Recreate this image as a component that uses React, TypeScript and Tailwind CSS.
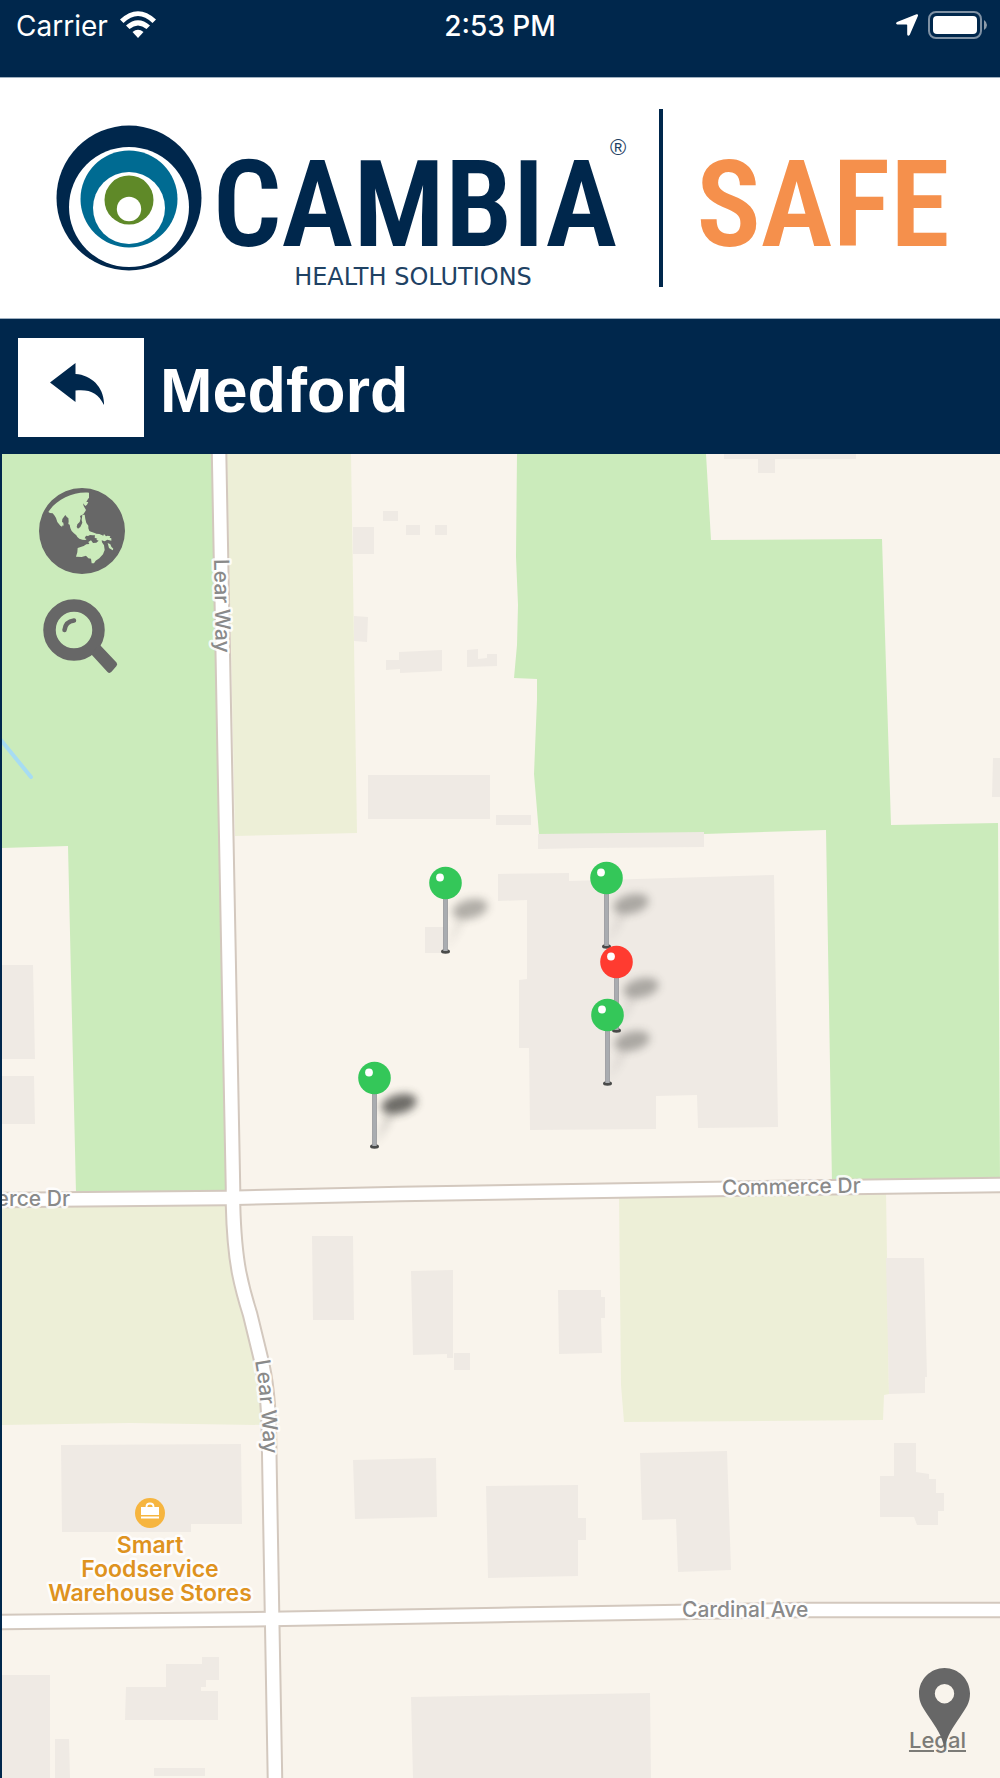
import React from 'react';

const BUILDINGS = [
  '383,511 398,511 398,521 383,521',
  '406,525 420,525 420,535 406,535',
  '435,525 447,525 447,535 435,535',
  '353,527 374,527 374,554 353,554',
  '354,616 368,617 367,642 354,641',
  '386,660 399,660 399,652 442,650 442,671 400,673 400,669 386,670',
  '467,650 478,649 478,659 487,658 487,654 497,654 497,666 467,667',
  '724,454 856,454 856,459 775,459 775,473 758,473 758,459 724,459',
  '993,758 1000,758 1000,797 992,797',
  '496,815 531,815 531,825 496,825',
  '538,834 704,832 704,847 588,848 538,849',
  '368,775 490,775 490,819 368,819',
  '425,927 446,927 446,953 425,953',
  '2,965 33,965 35,1059 2,1059',
  '2,1076 34,1076 35,1124 2,1124',
  '498,874 569,873 569,881 774,875 778,1127 698,1128 697,1095 656,1096 656,1129 530,1130 529,1048 519,1048 519,980 527,979 527,900 498,901',
  '312,1236 353,1236 354,1320 313,1320',
  '411,1271 453,1270 453,1358 447,1358 447,1354 413,1355',
  '454,1353 470,1353 470,1370 454,1370',
  '61,1445 241,1444 242,1524 191,1524 191,1532 62,1532',
  '353,1460 436,1458 437,1517 355,1519',
  '486,1486 578,1485 578,1518 586,1518 586,1540 578,1540 578,1576 488,1578',
  '166,1664 202,1664 202,1657 219,1657 219,1680 206,1680 206,1687 201,1687 201,1691 218,1691 218,1720 125,1720 126,1687 166,1687',
  '2,1675 50,1675 50,1778 2,1778',
  '55,1739 69,1739 70,1778 55,1778',
  '154,1768 205,1768 205,1776 154,1776',
  '411,1697 650,1693 651,1778 413,1778',
  '558,1290 601,1290 601,1297 605,1297 605,1318 601,1318 602,1353 559,1354',
  '886,1258 924,1258 927,1377 925,1377 925,1393 889,1394',
  '640,1453 727,1451 731,1570 678,1572 676,1519 642,1520',
  '894,1443 916,1443 916,1472 929,1474 929,1479 936,1479 936,1493 944,1493 944,1511 938,1511 938,1525 917,1525 914,1517 880,1517 880,1476 894,1476',
];

const ROADS = [
  'M2 1200 L226 1198 L400 1194 L850 1187 L1001 1185',
  'M2 1622 L270 1619 L500 1615 L680 1612 L800 1610 L1001 1610',
  'M219 450 L224 720 L233 1188 L233 1204 Q234 1245 239 1272 Q243 1292 250 1314 L260 1355 Q269 1390 269 1440 L272 1612 L275 1780',
];

const PINS = [
  { x: 445, y: 883, color: '#34c759', shade: 0.36 },
  { x: 606, y: 878, color: '#34c759', shade: 0.36 },
  { x: 616, y: 962, color: '#ff3b30', shade: 0.36 },
  { x: 607, y: 1015, color: '#34c759', shade: 0.36 },
  { x: 374, y: 1078, color: '#34c759', shade: 0.7 },
];

function Pin({ x, y, color, shade }: { x: number; y: number; color: string; shade: number }) {
  return (
    <g transform={`translate(${x} ${y})`}>
      <path d="M1 67 L12 38 L20 30 L16 44 Z" fill="#3b3a36" opacity={shade / 3} filter="url(#soft)" />
      <ellipse cx="25" cy="26" rx="18" ry="9.500" transform="rotate(-14 25 26)" fill="#33322e" opacity={shade} filter="url(#soft)" />
      <ellipse cx="0.500" cy="68.500" rx="4.500" ry="2.200" fill="#4a4b4a" />
      <rect x="-1.500" y="14" width="4" height="54" fill="#a9acb0" />
      <path d="M-1.500 14 V68 M2.500 14 V68" stroke="#8f9195" strokeWidth="0.700" />
      <circle cx="0.500" r="16.300" fill={color} />
      <circle cx="-5" cy="-5.500" r="3.900" fill="#fff" />
    </g>
  );
}

function MapCanvas() {
  return (
    <svg viewBox="2 454 998 1324" preserveAspectRatio="xMidYMid slice" className="block size-full bg-[#f9f4ec]" role="img" aria-label="Map of Medford">
      <defs>
        <filter id="soft" x="-50%" y="-80%" width="200%" height="260%">
          <feGaussianBlur stdDeviation="4" />
        </filter>
        <path id="lear-upper" d="M214 559 L216 665" />
        <path id="lear-lower" d="M255 1361 Q262 1400 264 1465" />
      </defs>
      <g fill="#cbebbb">
        <polygon points="2,454 212,454 226,1193 76,1193 68,846 2,848" />
        <polygon points="517,454 706,454 711,540 882,539 891,825 998,823 1000,1183 832,1183 826,830 704,834 539,834 534,774 537,700 537,679 514,678 517,645 518,605 516,557" />
      </g>
      <g fill="#edefd7">
        <polygon points="227,454 351,454 357,833 235,836" />
        <polygon points="2,1204 233,1204 238,1271 262,1372 264,1425 130,1423 2,1425" />
        <polygon points="619,1195 886,1190 889,1394 884,1395 883,1420 624,1422 621,1385" />
      </g>
      <path d="M0 739 L31 777" stroke="#a7dcf2" strokeWidth="4" strokeLinecap="round" />
      <g fill="#efeae4">
        {BUILDINGS.map((points) => (
          <polygon key={points} points={points} />
        ))}
      </g>
      <g fill="none" stroke="#d3c8be" strokeWidth="16.500">
        {ROADS.map((d) => (
          <path key={d} d={d} />
        ))}
      </g>
      <g fill="none" stroke="#fff" strokeWidth="12.500">
        {ROADS.map((d) => (
          <path key={d} d={d} />
        ))}
      </g>
      <g className="font-['Inter',sans-serif] text-[21px] font-medium" fill="#8a8a8a" stroke="#fff" strokeOpacity="0.85" strokeWidth="5" strokeLinejoin="round" paintOrder="stroke">
        <text x="722" y="1195" transform="rotate(-1 722 1195)">Commerce Dr</text>
        <text x="70" y="1206" textAnchor="end">erce Dr</text>
        <text x="682" y="1617">Cardinal Ave</text>
        <text>
          <textPath href="#lear-upper">Lear Way</textPath>
        </text>
        <text>
          <textPath href="#lear-lower">Lear Way</textPath>
        </text>
      </g>
      <circle cx="150" cy="1513" r="15" fill="#f6b53f" />
      <path d="M146.500 1508 V1506.500 Q146.500 1503.500 150 1503.500 Q153.500 1503.500 153.500 1506.500 V1508" fill="none" stroke="#fff" strokeWidth="1.800" />
      <path d="M141 1507 H159 V1515 H141 Z M141 1516.500 H159 V1518.500 H141 Z" fill="#fff" />
      <g className="font-['Inter',sans-serif] text-[23px] font-semibold" fill="#de931f" stroke="#fff" strokeOpacity="0.85" strokeWidth="5" strokeLinejoin="round" paintOrder="stroke" textAnchor="middle">
        <text x="150" y="1553">Smart</text>
        <text x="150" y="1577">Foodservice</text>
        <text x="150" y="1601">Warehouse Stores</text>
      </g>
      {PINS.map((pin) => (
        <Pin key={`${pin.x}-${pin.y}`} {...pin} />
      ))}
    </svg>
  );
}

function GlobeIcon() {
  return (
    <svg viewBox="9 8 258 258" className="size-[86px]" fill="currentColor" fillRule="evenodd" aria-hidden="true">
      <path
        d="M138 8 A129 129 0 1 0 138 266 A129 129 0 1 0 138 8 Z
        M159 22 C112 18 62 41 37 80 L42 83 L50 84 L56 91 L60 98 L64 110 L73 121 L78 124 L80 120 L83 121 L82 112 L78 110 L79 101 L88 89 L93 96 L97 98 L98 108 L97 116 L101 118 L103 128 L107 137 L113 143 L121 150 L124 155 L130 160 L139 163 L148 164 L152 161 L146 159 L150 151 L156 152 L162 149 L170 150 L177 150 L176 157 L184 160 L181 163 L188 166 L181 172 L171 173 L165 165 L157 170 L160 176 L151 177 L143 182 L125 188 L124 201 L120 214 L137 215 L150 211 L157 219 L165 220 L167 234 L174 234 L179 226 L190 219 L201 207 L206 194 L204 180 L198 171 L197 165 L206 168 L214 163 L226 166 L226 159 L221 157 L223 153 L215 151 L210 153 L204 146 L202 151 L190 146 L181 145 L174 142 L165 139 L160 137 L157 129 L157 121 L151 113 L148 101 L146 88 L139 89 L137 104 L139 112 L133 125 L126 130 L122 125 L124 117 L131 110 L134 99 L132 92 L142 87 L147 79 L150 74 L143 62 L141 54 L148 62 L153 58 L157 50 L151 50 L156 41 L159 37 Z
        M215 173 L223 177 L226 184 L232 190 L230 195 L219 188 Z"
      />
      <path d="M157 157 L164 151 L171 155 L168 160 L158 161 Z" />
    </svg>
  );
}

function StatusBar() {
  return (
    <div className="grid h-[77px] grid-cols-3 items-start px-4 pt-1.5 font-['Inter',sans-serif] text-[28px] leading-10 text-white">
      <div className="flex items-center gap-3">
        <span>Carrier</span>
        <svg viewBox="0 0 36 27" className="-mt-1 h-[27px] w-9" fill="#fff" aria-hidden="true">
          <path d="M0 8.500 Q18 -8 36 8.500 L32.500 12 Q18 -2 3.500 12 Z" />
          <path d="M6 14.500 Q18 4 30 14.500 L26.500 18 Q18 11 9.500 18 Z" />
          <path d="M12.500 21 Q18 16.500 23.500 21 L18 27 Z" />
        </svg>
      </div>
      <span className="text-center font-medium">2:53 PM</span>
      <div className="-mr-1 flex h-[37px] items-center justify-end gap-2.5">
        <svg viewBox="0 0 22 22" className="size-[22px]" fill="#fff" aria-hidden="true">
          <path d="M20.500 0.200 Q22.400 -0.200 22 1.800 L13.800 20.800 Q12 23 11.200 20.500 V11.300 Q11.200 10.600 10.500 10.600 L1.300 10.500 Q-1 9.500 1 8 Z" />
        </svg>
        <svg viewBox="0 0 60 28" className="h-7 w-[60px]" aria-hidden="true">
          <rect x="1" y="1" width="52" height="26" rx="7" fill="none" stroke="#7f91a4" strokeWidth="2" />
          <rect x="5" y="5" width="44" height="18" rx="4" fill="#fff" />
          <path d="M56 9 Q59 11 59 14 Q59 17 56 19 Z" fill="#8c9baa" />
        </svg>
      </div>
    </div>
  );
}

function Logo() {
  return (
    <svg viewBox="0 78 1000 240" className="block w-full" role="img" aria-label="Cambia Health Solutions Safe">
      <circle cx="129" cy="198" r="72.500" fill="#00274c" />
      <circle cx="129" cy="207" r="60" fill="#fff" />
      <circle cx="129" cy="199" r="48.500" fill="#006b92" />
      <circle cx="129" cy="208" r="36" fill="#fff" />
      <circle cx="129" cy="200" r="24.500" fill="#5f8928" />
      <circle cx="129" cy="209" r="12.200" fill="#fff" />
      <g className="font-['Roboto_Condensed','DejaVu_Sans_Condensed',sans-serif] text-[121px] font-semibold">
        <text x="415" y="246" textAnchor="middle" fill="#00274c">CAMBIA</text>
        <text x="823" y="246" textAnchor="middle" fill="#f5904c">SAFE</text>
      </g>
      <text x="413" y="285" textAnchor="middle" className="font-['DejaVu_Sans',sans-serif] text-[24px]" fill="#1f4264">HEALTH SOLUTIONS</text>
      <text x="618" y="155" textAnchor="middle" className="font-['Liberation_Sans',sans-serif] text-[22px]" fill="#1f4264">®</text>
      <rect x="659" y="109" width="4" height="178" fill="#00274c" />
    </svg>
  );
}

export default function App() {
  return (
    <div className="flex min-h-screen flex-col bg-[#00274c]">
      <StatusBar />
      <header className="border-y border-[#9fb0c0] bg-white">
        <Logo />
      </header>
      <div className="flex items-center gap-4 px-[18px] pt-[19px] pb-[17px]">
        <button type="button" aria-label="Back" className="flex h-[99px] w-[126px] items-center justify-center bg-white">
          <svg viewBox="0 0 54 42" className="-mt-2 -ml-2 h-[42px] w-[54px]" fill="#00274c" aria-hidden="true">
            <path d="M0 19.500 L25.500 0 V11 C42 12 54.500 25 54 42 C48 30 40 26 25.500 27.500 V39 Z" />
          </svg>
        </button>
        <h1 className="pt-1.5 font-['Liberation_Sans',Arial,sans-serif] text-[63px] leading-none font-bold text-white">Medford</h1>
      </div>
      <main className="relative min-h-[600px] flex-1 overflow-hidden">
        <div className="absolute inset-y-0 right-0 left-0.5">
          <MapCanvas />
        </div>
        <div className="absolute top-[34px] left-[39px] flex flex-col items-start gap-[25px] text-[#676767]">
          <button type="button" aria-label="Map type">
            <GlobeIcon />
          </button>
          <button type="button" aria-label="Search" className="ml-1">
            <svg viewBox="0 0 75 75" className="size-[75px]" fill="none" stroke="currentColor" aria-hidden="true">
              <circle cx="31" cy="31" r="24.500" strokeWidth="12.500" />
              <path d="M21.500 31 Q22.500 22.500 31 21.500" strokeWidth="4.500" strokeLinecap="round" />
              <path d="M48.500 53.500 L57 46 L73.500 63.500 Q75 65.500 73.300 67.300 L68.500 72.800 Q66.500 75 64.500 73 L48 55 Z" fill="currentColor" stroke="none" />
            </svg>
          </button>
        </div>
        <a href="#legal" className="absolute right-[34px] bottom-6 font-['Inter',sans-serif] text-[22px] leading-7 font-medium text-[#7c7b77] underline decoration-2 underline-offset-2">
          Legal
        </a>
        <button type="button" aria-label="My location" className="absolute right-[30px] bottom-[30px] text-[#676767]">
          <svg viewBox="0 0 51 80" className="h-20 w-[51px]" fill="currentColor" fillRule="evenodd" aria-hidden="true">
            <path d="M25.500 0 C39.500 0 51 11.500 51 25.500 C51 35 47 40 41 49 C34 59 28 68 25.500 80 C23 68 17 59 10 49 C4 40 0 35 0 25.500 C0 11.500 11.500 0 25.500 0 Z M25.500 16 A9.700 9.700 0 1 0 25.500 35.400 A9.700 9.700 0 1 0 25.500 16 Z" />
          </svg>
        </button>
      </main>
    </div>
  );
}
